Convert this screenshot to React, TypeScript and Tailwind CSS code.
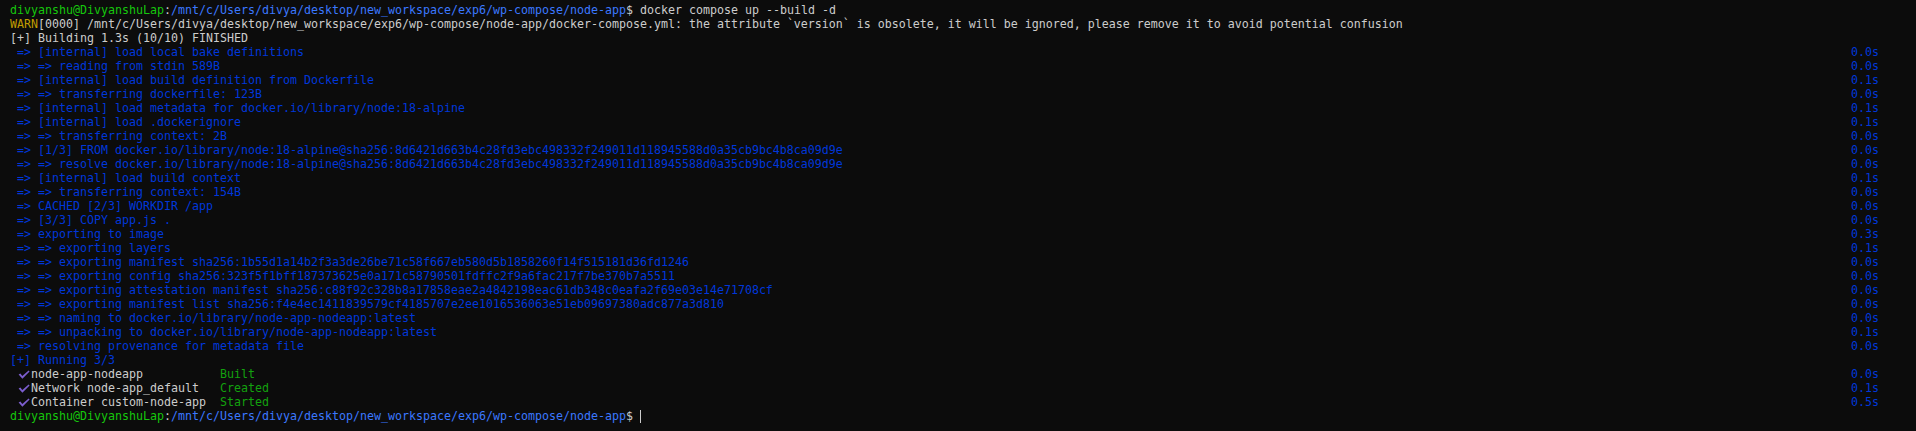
import React from "react";

type Seg = { t: string; c: string };
type Line = { segs: Seg[]; time?: string; check?: boolean; cursor?: boolean };

const W = "text-[#cccccc]";
const B = "text-[#0037da]";
const G = "text-[#16c60c]";
const BB = "text-[#3b78ff]";
const Y = "text-[#c19c00]";
const GS = "text-[#13a10e]";

const prompt = (): Seg[] => [
  { t: "divyanshu@DivyanshuLap", c: G },
  { t: ":", c: W },
  { t: "/mnt/c/Users/divya/desktop/new_workspace/exp6/wp-compose/node-app", c: BB },
  { t: "$ ", c: W },
];

const build = (t: string, time: string): Line => ({ segs: [{ t: " " + t, c: B }], time });

const svc = (name: string, status: string, time: string): Line => ({
  check: true,
  segs: [
    { t: name.padEnd(27, " "), c: W },
    { t: status, c: GS },
  ],
  time,
});

const lines: Line[] = [
  { segs: [...prompt(), { t: "docker compose up --build -d", c: W }] },
  {
    segs: [
      { t: "WARN", c: Y },
      {
        t: "[0000] /mnt/c/Users/divya/desktop/new_workspace/exp6/wp-compose/node-app/docker-compose.yml: the attribute `version` is obsolete, it will be ignored, please remove it to avoid potential confusion",
        c: W,
      },
    ],
  },
  { segs: [{ t: "[+] Building 1.3s (10/10) FINISHED", c: W }] },
  build("=> [internal] load local bake definitions", "0.0s"),
  build("=> => reading from stdin 589B", "0.0s"),
  build("=> [internal] load build definition from Dockerfile", "0.1s"),
  build("=> => transferring dockerfile: 123B", "0.0s"),
  build("=> [internal] load metadata for docker.io/library/node:18-alpine", "0.1s"),
  build("=> [internal] load .dockerignore", "0.1s"),
  build("=> => transferring context: 2B", "0.0s"),
  build(
    "=> [1/3] FROM docker.io/library/node:18-alpine@sha256:8d6421d663b4c28fd3ebc498332f249011d118945588d0a35cb9bc4b8ca09d9e",
    "0.0s"
  ),
  build(
    "=> => resolve docker.io/library/node:18-alpine@sha256:8d6421d663b4c28fd3ebc498332f249011d118945588d0a35cb9bc4b8ca09d9e",
    "0.0s"
  ),
  build("=> [internal] load build context", "0.1s"),
  build("=> => transferring context: 154B", "0.0s"),
  build("=> CACHED [2/3] WORKDIR /app", "0.0s"),
  build("=> [3/3] COPY app.js .", "0.0s"),
  build("=> exporting to image", "0.3s"),
  build("=> => exporting layers", "0.1s"),
  build(
    "=> => exporting manifest sha256:1b55d1a14b2f3a3de26be71c58f667eb580d5b1858260f14f515181d36fd1246",
    "0.0s"
  ),
  build(
    "=> => exporting config sha256:323f5f1bff187373625e0a171c58790501fdffc2f9a6fac217f7be370b7a5511",
    "0.0s"
  ),
  build(
    "=> => exporting attestation manifest sha256:c88f92c328b8a17858eae2a4842198eac61db348c0eafa2f69e03e14e71708cf",
    "0.0s"
  ),
  build(
    "=> => exporting manifest list sha256:f4e4ec1411839579cf4185707e2ee1016536063e51eb09697380adc877a3d810",
    "0.0s"
  ),
  build("=> => naming to docker.io/library/node-app-nodeapp:latest", "0.0s"),
  build("=> => unpacking to docker.io/library/node-app-nodeapp:latest", "0.1s"),
  build("=> resolving provenance for metadata file", "0.0s"),
  { segs: [{ t: "[+] Running 3/3", c: B }] },
  svc("node-app-nodeapp", "Built", "0.0s"),
  svc("Network node-app_default", "Created", "0.1s"),
  svc("Container custom-node-app", "Started", "0.5s"),
  { segs: prompt(), cursor: true },
];

function Check() {
  return (
    <span className="inline-flex w-[21px] h-[14px] items-center justify-end pr-[1px] align-top">
      <svg width="12" height="9" viewBox="0 0 12 9" className="block">
        <path
          d="M0.6 4.6 L2.4 3.6 L4.3 6.0 L10.6 0.4 L11.6 1.4 L4.4 8.8 Z"
          fill="#7c5ecf"
        />
      </svg>
    </span>
  );
}

export default function App() {
  return (
    <div
      className="w-[1916px] h-[431px] overflow-hidden bg-[#0c0c0c] pt-[3px] pl-[10px] text-[11.63px] leading-[14px] text-[#cccccc]"
      style={{ fontFamily: '"DejaVu Sans Mono", "Liberation Mono", monospace' }}
    >
      {lines.map((ln, i) => (
        <div key={i} className="flex h-[14px]">
          <div className="w-[1841px] shrink-0 whitespace-pre flex items-start">
            {ln.check && <Check />}
            <span className="whitespace-pre">
              {ln.segs.map((s, j) => (
                <span key={j} className={s.c}>
                  {s.t}
                </span>
              ))}
            </span>
            {ln.cursor && <span className="inline-block w-[1px] h-[13px] mt-[1px] bg-[#cccccc]" />}
          </div>
          {ln.time && <span className={"whitespace-pre " + B}>{ln.time}</span>}
        </div>
      ))}
    </div>
  );
}
